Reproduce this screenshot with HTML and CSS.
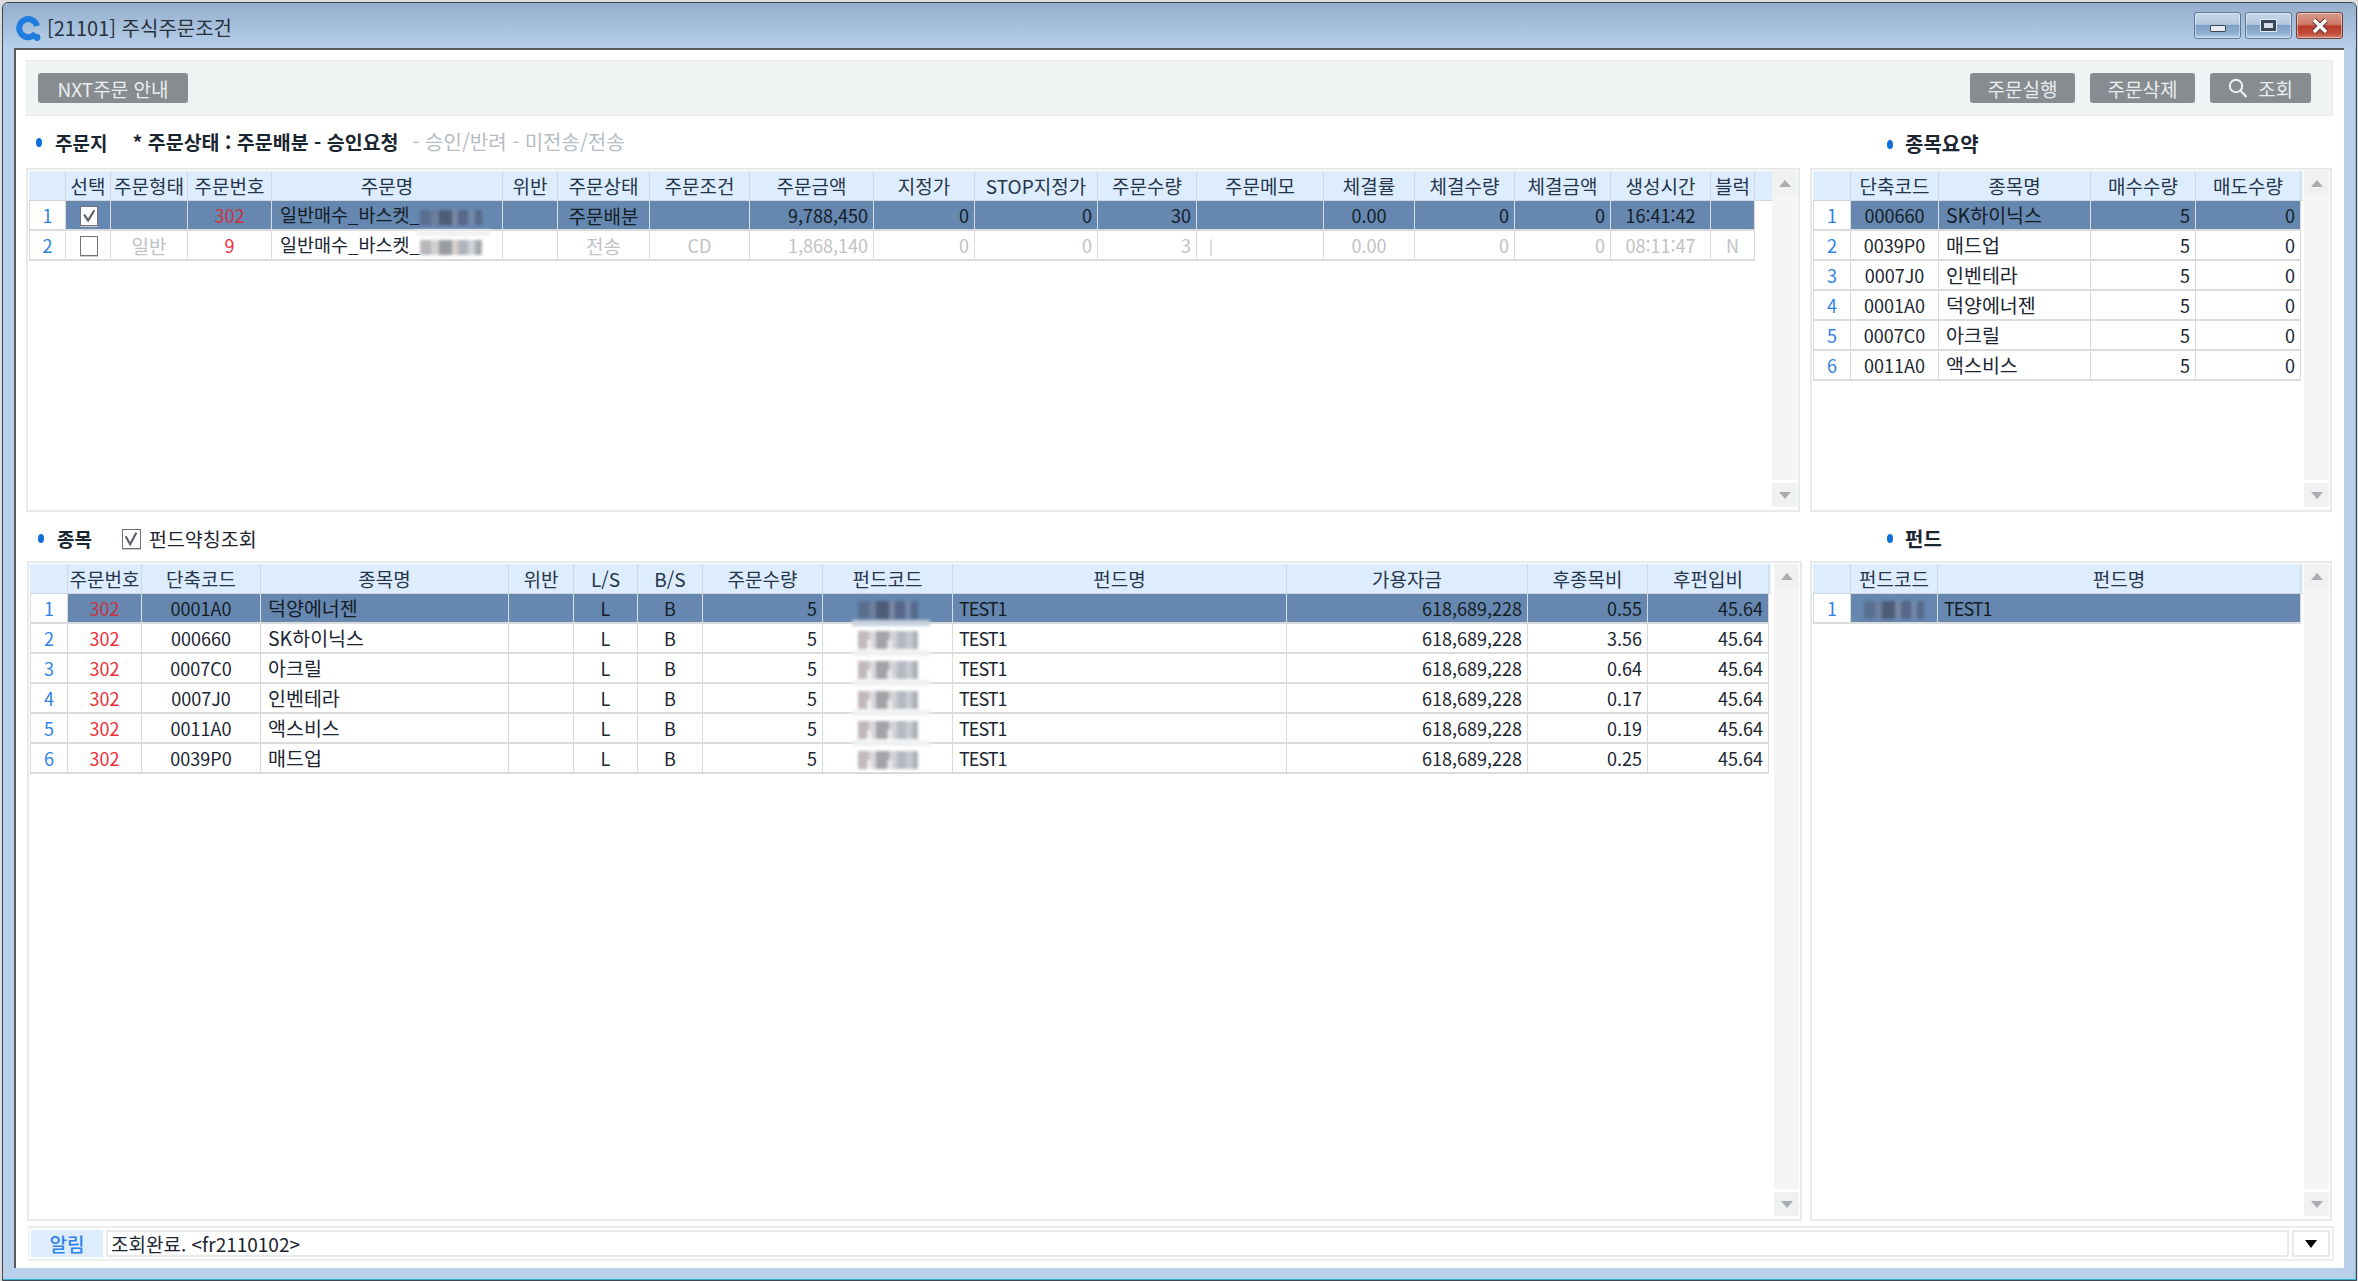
FILE: index.html
```html
<!DOCTYPE html>
<html lang="ko">
<head>
    <meta charset="utf-8">
    <title>[21101] 주식주문조건</title>
    <link rel="stylesheet" href="styles.css">
</head>

<body>
<div class="window">
    <div class="titlebar">
        <svg class="app-icon" viewBox="0 0 26 26"><path d="M19.5 17.5A9 9 0 1 1 21 10" fill="none" stroke="#1f7de0" stroke-width="6"/><circle cx="21" cy="21.5" r="3.4" fill="#1f7de0"/></svg>
        <span class="title-text">[21101] 주식주문조건</span>
        <div class="win-buttons">
            <div class="win-btn"><span class="glyph-min"></span></div>
            <div class="win-btn"><span class="glyph-max"></span></div>
            <div class="win-btn close">
                <svg viewBox="0 0 20 16" class="glyph-x"><path d="M4 2 16 14M16 2 4 14" stroke="#5c3a36" stroke-width="5.4"/><path d="M4 2 16 14M16 2 4 14" stroke="#fff" stroke-width="3.4"/></svg>
            </div>
        </div>
    </div>

    <div class="main">
        <div class="toolbar">
            <button class="btn nxt">NXT주문 안내</button>
            <div class="toolbar-right">
                <button class="btn">주문실행</button>
                <button class="btn">주문삭제</button>
                <button class="btn search">
                    <svg class="search-icon" viewBox="0 0 20 20"><circle cx="8" cy="8" r="6.2" fill="none" stroke="#eef1f2" stroke-width="2"/><path d="M12.5 12.5 18.5 19" stroke="#eef1f2" stroke-width="2.2"/></svg>
                    조회
                </button>
            </div>
        </div>

        <div class="pane-row top">
            <div class="pane">
                <div class="head">
                    <span class="bullet"></span><span class="head-name">주문지</span>
                    <span class="status">* 주문상태 : 주문배분 - 승인요청</span>
                    <span class="status-off">- 승인/반려 - 미전송/전송</span>
                </div>
                <div class="panel">
                    <table class="grid orders">
                        <colgroup><col><col><col><col><col><col><col><col><col><col><col><col><col><col><col><col><col><col><col></colgroup>
                        <thead><tr><th></th><th>선택</th><th>주문형태</th><th>주문번호</th><th>주문명</th><th>위반</th><th>주문상태</th><th>주문조건</th><th>주문금액</th><th>지정가</th><th>STOP지정가</th><th>주문수량</th><th>주문메모</th><th>체결률</th><th>체결수량</th><th>체결금액</th><th>생성시간</th><th>블럭</th><th class="filler"></th></tr></thead>
                        <tbody>
                        <tr class="selected">
                            <td class="no">1</td>
                            <td><span class="check on"><svg viewBox="0 0 18 18"><path d="M3.5 7.5 8 14 15 2.5" fill="none" stroke="#5a6066" stroke-width="2.4"/></svg></span></td>
                            <td></td><td class="red">302</td>
                            <td class="l basket">일반매수_바스켓_<span class="mosaic strip"></span></td>
                            <td></td><td class="ko">주문배분</td><td></td>
                            <td class="r">9,788,450</td><td class="r">0</td><td class="r">0</td><td class="r">30</td><td></td>
                            <td>0.00</td><td class="r">0</td><td class="r">0</td><td>16:41:42</td><td></td><td class="filler"></td>
                        </tr>
                        <tr class="muted">
                            <td class="no">2</td>
                            <td><span class="check"></span></td>
                            <td class="ko">일반</td><td class="red">9</td>
                            <td class="l basket dark">일반매수_바스켓_<span class="mosaic"></span></td>
                            <td></td><td class="ko">전송</td><td>CD</td>
                            <td class="r">1,868,140</td><td class="r">0</td><td class="r">0</td><td class="r">3</td><td class="memo">|</td>
                            <td>0.00</td><td class="r">0</td><td class="r">0</td><td>08:11:47</td><td>N</td><td class="filler"></td>
                        </tr>
                        </tbody>
                    </table>
                    <div class="scrollbar"><div class="sb-btn"><span class="arrow-up"></span></div><div class="sb-track"></div><div class="sb-btn"><span class="arrow-down"></span></div></div>
                </div>
            </div>

            <div class="pane">
                <div class="head side"><span class="bullet"></span><span class="head-name">종목요약</span></div>
                <div class="panel">
                    <table class="grid summary">
                        <colgroup><col><col><col><col><col><col></colgroup>
                        <thead><tr><th></th><th>단축코드</th><th>종목명</th><th>매수수량</th><th>매도수량</th><th class="filler"></th></tr></thead>
                        <tbody>
                        <tr class="selected"><td class="no">1</td><td>000660</td><td class="l">SK하이닉스</td><td class="r">5</td><td class="r">0</td><td class="filler"></td></tr>
                        <tr><td class="no">2</td><td>0039P0</td><td class="l">매드업</td><td class="r">5</td><td class="r">0</td><td class="filler"></td></tr>
                        <tr><td class="no">3</td><td>0007J0</td><td class="l">인벤테라</td><td class="r">5</td><td class="r">0</td><td class="filler"></td></tr>
                        <tr><td class="no">4</td><td>0001A0</td><td class="l">덕양에너젠</td><td class="r">5</td><td class="r">0</td><td class="filler"></td></tr>
                        <tr><td class="no">5</td><td>0007C0</td><td class="l">아크릴</td><td class="r">5</td><td class="r">0</td><td class="filler"></td></tr>
                        <tr><td class="no">6</td><td>0011A0</td><td class="l">액스비스</td><td class="r">5</td><td class="r">0</td><td class="filler"></td></tr>
                        </tbody>
                    </table>
                    <div class="scrollbar"><div class="sb-btn"><span class="arrow-up"></span></div><div class="sb-track"></div><div class="sb-btn"><span class="arrow-down"></span></div></div>
                </div>
            </div>
        </div>

        <div class="pane-row bottom">
            <div class="pane">
                <div class="head">
                    <span class="bullet"></span><span class="head-name">종목</span>
                    <span class="check big on"><svg viewBox="0 0 18 18"><path d="M3 6 8 15 15 2" fill="none" stroke="#5a6066" stroke-width="2.4"/></svg></span>
                    <span class="check-label">펀드약칭조회</span>
                </div>
                <div class="panel">
                    <table class="grid stocks">
                        <colgroup><col><col><col><col><col><col><col><col><col><col><col><col><col><col></colgroup>
                        <thead><tr><th></th><th>주문번호</th><th>단축코드</th><th>종목명</th><th>위반</th><th>L/S</th><th>B/S</th><th>주문수량</th><th>펀드코드</th><th>펀드명</th><th>가용자금</th><th>후종목비</th><th>후펀입비</th><th class="filler"></th></tr></thead>
                        <tbody>
                        <tr class="selected"><td class="no">1</td><td class="red">302</td><td>0001A0</td><td class="l">덕양에너젠</td><td></td><td>L</td><td>B</td><td class="r">5</td><td><span class="mosaic wide strip"></span></td><td class="l test">TEST1</td><td class="r">618,689,228</td><td class="r">0.55</td><td class="r">45.64</td><td class="filler"></td></tr>
                        <tr><td class="no">2</td><td class="red">302</td><td>000660</td><td class="l">SK하이닉스</td><td></td><td>L</td><td>B</td><td class="r">5</td><td><span class="mosaic wide strip"></span></td><td class="l test">TEST1</td><td class="r">618,689,228</td><td class="r">3.56</td><td class="r">45.64</td><td class="filler"></td></tr>
                        <tr><td class="no">3</td><td class="red">302</td><td>0007C0</td><td class="l">아크릴</td><td></td><td>L</td><td>B</td><td class="r">5</td><td><span class="mosaic wide strip"></span></td><td class="l test">TEST1</td><td class="r">618,689,228</td><td class="r">0.64</td><td class="r">45.64</td><td class="filler"></td></tr>
                        <tr><td class="no">4</td><td class="red">302</td><td>0007J0</td><td class="l">인벤테라</td><td></td><td>L</td><td>B</td><td class="r">5</td><td><span class="mosaic wide strip"></span></td><td class="l test">TEST1</td><td class="r">618,689,228</td><td class="r">0.17</td><td class="r">45.64</td><td class="filler"></td></tr>
                        <tr><td class="no">5</td><td class="red">302</td><td>0011A0</td><td class="l">액스비스</td><td></td><td>L</td><td>B</td><td class="r">5</td><td><span class="mosaic wide strip"></span></td><td class="l test">TEST1</td><td class="r">618,689,228</td><td class="r">0.19</td><td class="r">45.64</td><td class="filler"></td></tr>
                        <tr><td class="no">6</td><td class="red">302</td><td>0039P0</td><td class="l">매드업</td><td></td><td>L</td><td>B</td><td class="r">5</td><td><span class="mosaic wide"></span></td><td class="l test">TEST1</td><td class="r">618,689,228</td><td class="r">0.25</td><td class="r">45.64</td><td class="filler"></td></tr>
                        </tbody>
                    </table>
                    <div class="scrollbar"><div class="sb-btn"><span class="arrow-up"></span></div><div class="sb-track"></div><div class="sb-btn"><span class="arrow-down"></span></div></div>
                </div>
            </div>

            <div class="pane">
                <div class="head side"><span class="bullet"></span><span class="head-name">펀드</span></div>
                <div class="panel">
                    <table class="grid funds">
                        <colgroup><col><col><col><col></colgroup>
                        <thead><tr><th></th><th>펀드코드</th><th>펀드명</th><th class="filler"></th></tr></thead>
                        <tbody>
                        <tr class="selected"><td class="no">1</td><td><span class="mosaic wide"></span></td><td class="l test">TEST1</td><td class="filler"></td></tr>
                        </tbody>
                    </table>
                    <div class="scrollbar"><div class="sb-btn"><span class="arrow-up"></span></div><div class="sb-track"></div><div class="sb-btn"><span class="arrow-down"></span></div></div>
                </div>
            </div>
        </div>

        <div class="notice">
            <div class="notice-label">알림</div>
            <div class="notice-text">조회완료. &lt;fr2110102&gt;</div>
            <div class="notice-drop"><span class="arrow-black"></span></div>
        </div>
    </div>
</div>
</body>
</html>
```

FILE: styles.css
```css
* {
    box-sizing: border-box;
}

body {
    margin: 0;
    height: 1281px;
    overflow: hidden;
    background-color: #dcdcdc;
    font-family: "Noto Sans CJK KR", "Noto Sans", sans-serif;
    font-size: 18px;
    color: #1b2530;
}

.window {
    margin: 2px 0 0 2px;
    width: 2355px;
    height: 1279px;
    background-color: #b9d0ea;
    border: 1px solid #3d4650;
    border-radius: 6px 6px 0 0;
    box-shadow: inset 0 -1px 0 #2fb3cf, inset -1px 0 0 #7fb8d8;
}

/* title bar */
.titlebar {
    display: flex;
    align-items: center;
    height: 45px;
    padding-left: 13px;
    background: linear-gradient(#94aecd, #b7cfe9);
    border-radius: 6px 6px 0 0;
}

.app-icon {
    width: 26px;
    height: 26px;
    margin-top: 6px;
}

.title-text {
    margin-left: 5px;
    margin-top: 4px;
    font-size: 20px;
    color: #27313c;
}

.win-buttons {
    display: flex;
    gap: 4px;
    margin-left: auto;
    margin-right: 13px;
}

.win-btn {
    display: flex;
    align-items: center;
    justify-content: center;
    width: 47px;
    height: 27px;
    border: 1px solid #5f7894;
    border-radius: 3px;
    background: linear-gradient(#c6d6e8 0, #b3c8df 45%, #7e9fc4 50%, #90afd0 80%, #bcd0e8 100%);
    box-shadow: inset 0 0 0 1px rgba(255, 255, 255, 0.45);
}

.win-btn.close {
    border-color: #70403a;
    background: linear-gradient(#d89a8c 0, #cf7a69 45%, #b93a28 52%, #c04a36 80%, #d57f6e 100%);
}

.glyph-min {
    width: 16px;
    height: 7px;
    margin-top: 5px;
    background-color: #e6ecf2;
    border: 1px solid #3b4756;
    border-radius: 1px;
}

.glyph-max {
    width: 15px;
    height: 11px;
    margin-top: -1px;
    background-color: #d5deea;
    border: 3px solid #38465a;
    box-shadow: 0 0 0 1px #e4ecf4;
}

.glyph-x {
    width: 20px;
    height: 16px;
}

/* main area */
.main {
    display: flex;
    flex-direction: column;
    height: 1220px;
    margin: 0 12px 0 11px;
    padding: 10px 11px 6px 10px;
    background-color: white;
    border-top: 2px solid #565b60;
    border-left: 2px solid #565b60;
}

.toolbar {
    display: flex;
    align-items: center;
    justify-content: space-between;
    height: 56px;
    padding: 0 21px 0 11px;
    background-color: #f0f3f4;
    border: 1px solid #e6e9ea;
}

.toolbar-right {
    display: flex;
    gap: 15px;
}

.btn {
    display: flex;
    align-items: center;
    justify-content: center;
    gap: 10px;
    width: 105px;
    height: 30px;
    padding: 0;
    background-color: #878c90;
    border: none;
    border-radius: 3px;
    font-family: inherit;
    font-size: 19px;
    color: #eaedef;
}

.btn.nxt {
    width: 150px;
}

.btn.search {
    width: 101px;
}

.search-icon {
    width: 20px;
    height: 20px;
}

.pane-row {
    display: grid;
}

.pane-row.top {
    grid-template-columns: 1774px 522px;
    gap: 10px;
    height: 396px;
}

.pane-row.bottom {
    grid-template-columns: 1775px 522px;
    gap: 8px;
    height: 709px;
    margin-left: 1px;
}

.pane {
    display: flex;
    flex-direction: column;
    min-height: 0;
}

.head {
    display: flex;
    align-items: center;
    height: 52px;
    padding-left: 10px;
    font-weight: 700;
    font-size: 19px;
    line-height: 1;
}

.bottom .head {
    height: 49px;
    padding-top: 4px;
    padding-left: 11px;
}

.head.side {
    padding-left: 77px;
    padding-top: 4px;
    font-size: 20px;
}

.bullet {
    width: 6px;
    height: 9px;
    margin-right: 13px;
    border-radius: 50%;
    background-color: #0e6fdc;
}

.head.side .bullet {
    margin-right: 12px;
}

.status {
    margin-left: 25px;
    font-size: 19.5px;
}

.status-off {
    margin-left: 14px;
    font-weight: 400;
    font-size: 20px;
    color: #b6bcc2;
}

.check-label {
    font-weight: 400;
    font-size: 19.5px;
    margin-left: 8px;
}

/* grids */
.panel {
    display: flex;
    flex: 1;
    min-height: 0;
    padding: 1px;
    background-color: white;
    border: 2px solid #e7e9ea;
}

.grid {
    table-layout: fixed;
    align-self: flex-start;
    border-collapse: separate;
    border-spacing: 0;
    line-height: 1;
}

.grid th {
    height: 30px;
    padding: 0;
    font-weight: 400;
    font-size: 19px;
    color: #25354a;
    background-color: #deedfe;
    border-right: 1px solid #cfd7de;
    border-bottom: 1px solid #cfd7de;
    white-space: nowrap;
}

.grid td {
    position: relative;
    height: 30px;
    padding: 0 5px;
    text-align: center;
    white-space: nowrap;
    border-right: 1px solid #d9dbdd;
    border-bottom: 2px solid #d9dbdd;
}

.grid td.l {
    padding-left: 7px;
    text-align: left;
    font-size: 19.5px;
}

.grid td.basket {
    padding-left: 8px;
    font-size: 18.5px;
}

.grid td.test {
    padding-left: 6px;
    font-size: 18px;
    letter-spacing: -1px;
}

.grid td.ko {
    font-size: 19px;
}

.grid td.memo {
    padding-left: 12px;
    text-align: left;
    font-size: 15px;
}

.grid td.r {
    text-align: right;
}

.grid td.no {
    color: #2f82e6;
    background-color: white;
    border-left: 1px solid #d9dbdd;
}

.grid .red {
    color: #ee2f3a;
}

.grid .selected td {
    background-color: #6688b0;
    color: #141c26;
}

.grid .selected td.no {
    background-color: white;
    color: #2f82e6;
}

.grid .selected td.red {
    color: #c8323e;
}

.grid .muted td {
    color: #bfc2c5;
}

.grid .muted td.no {
    color: #2f82e6;
}

.grid .muted td.red {
    color: #ee2f3a;
}

.grid .muted td.dark {
    color: #1b2530;
}

.grid td.filler {
    padding: 0;
    background: none !important;
    border: none;
}

.grid th.filler {
    border-right: none;
}

.orders {
    width: 1743px;
}

.orders col:nth-child(1) { width: 37px; }
.orders col:nth-child(2) { width: 45px; }
.orders col:nth-child(3) { width: 77px; }
.orders col:nth-child(4) { width: 84px; }
.orders col:nth-child(5) { width: 231px; }
.orders col:nth-child(6) { width: 55px; }
.orders col:nth-child(7) { width: 92px; }
.orders col:nth-child(8) { width: 100px; }
.orders col:nth-child(9) { width: 124px; }
.orders col:nth-child(10) { width: 101px; }
.orders col:nth-child(11) { width: 123px; }
.orders col:nth-child(12) { width: 99px; }
.orders col:nth-child(13) { width: 127px; }
.orders col:nth-child(14) { width: 91px; }
.orders col:nth-child(15) { width: 100px; }
.orders col:nth-child(16) { width: 96px; }
.orders col:nth-child(17) { width: 100px; }
.orders col:nth-child(18) { width: 44px; }
.orders col:nth-child(19) { width: 17px; }

.orders .check {
    margin-left: 2px;
}

.summary {
    width: 490px;
}

.summary col:nth-child(1) { width: 38px; }
.summary col:nth-child(2) { width: 88px; }
.summary col:nth-child(3) { width: 152px; }
.summary col:nth-child(4) { width: 105px; }
.summary col:nth-child(5) { width: 105px; }
.summary col:nth-child(6) { width: 2px; }

.stocks {
    width: 1741px;
}

.stocks col:nth-child(1) { width: 38px; }
.stocks col:nth-child(2) { width: 74px; }
.stocks col:nth-child(3) { width: 119px; }
.stocks col:nth-child(4) { width: 248px; }
.stocks col:nth-child(5) { width: 65px; }
.stocks col:nth-child(6) { width: 64px; }
.stocks col:nth-child(7) { width: 65px; }
.stocks col:nth-child(8) { width: 120px; }
.stocks col:nth-child(9) { width: 130px; }
.stocks col:nth-child(10) { width: 334px; }
.stocks col:nth-child(11) { width: 241px; }
.stocks col:nth-child(12) { width: 120px; }
.stocks col:nth-child(13) { width: 121px; }
.stocks col:nth-child(14) { width: 2px; }

.funds {
    width: 490px;
}

.funds col:nth-child(1) { width: 38px; }
.funds col:nth-child(2) { width: 87px; }
.funds col:nth-child(3) { width: 363px; }
.funds col:nth-child(4) { width: 2px; }

/* checkboxes */
.check {
    display: inline-block;
    width: 18px;
    height: 20px;
    vertical-align: middle;
    background-color: white;
    border: 1px solid #6d7278;
    box-shadow: 0 1px 0 #c9ccd0;
}

.check svg {
    display: block;
    width: 16px;
    height: 18px;
}

.check.big {
    width: 19px;
    height: 20px;
    margin-left: 30px;
}

/* blurred-out values */
.mosaic {
    position: relative;
    display: inline-block;
    width: 62px;
    height: 15px;
    vertical-align: -3px;
    background:
        linear-gradient(90deg, #b8b8bc 0 18%, #cfcfd2 18% 30%, #9a9ba0 30% 52%, #d6d2cc 52% 62%, #b2b4ba 62% 78%, #d0d3d8 78% 88%, #a6aab0 88% 100%);
    filter: blur(1.5px);
}

.selected .mosaic {
    background:
        linear-gradient(90deg, #5a6f90 0 18%, #6c7f9f 18% 30%, #4e5d78 30% 52%, #7788a4 52% 62%, #56678a 62% 78%, #7288a8 78% 88%, #566a8c 88% 100%);
}

.mosaic.wide {
    width: 60px;
    height: 18px;
    vertical-align: middle;
    background:
        linear-gradient(90deg, transparent 0 15%, rgba(255, 255, 255, 0.75) 15% 22%, transparent 22% 48%, rgba(255, 255, 255, 0.6) 48% 56%, transparent 56% 100%) 0 9px / 100% 9px no-repeat,
        linear-gradient(90deg, #c0b8ba 0 18%, #d8d8da 18% 30%, #a3a4a8 30% 52%, #d0d2d4 52% 65%, #b4bac0 65% 80%, #c8ccd2 80% 90%, #b0b2b6 90% 100%);
}

.selected .mosaic.wide {
    background:
        linear-gradient(90deg, #5a6f90 0 18%, #6c7f9f 18% 30%, #4e5d78 30% 52%, #7788a4 52% 62%, #56678a 62% 78%, #7288a8 78% 88%, #566a8c 88% 100%);
}

.strip::after {
    content: "";
    position: absolute;
    left: -4px;
    right: -8px;
    top: 100%;
    margin-top: 5px;
    height: 6px;
    background-color: #f0f1f2;
}

.stocks .strip::after {
    margin-top: 1px;
    left: -6px;
    right: -12px;
}

.stocks .selected .strip::after {
    background-color: #c6d0dc;
}

/* scrollbars */
.scrollbar {
    display: flex;
    flex-direction: column;
    width: 25px;
    margin-left: auto;
    padding: 0 0 2px;
}

.sb-btn {
    display: flex;
    align-items: center;
    justify-content: center;
    height: 24px;
    background-color: #f0f1f1;
}

.sb-track {
    flex: 1;
    margin: 0 0 3px;
    background-color: #fbfbfb;
    background-image: repeating-conic-gradient(#efefef 0 25%, #fbfbfb 0 50%);
    background-size: 2px 2px;
}

.arrow-up {
    border: 6px solid transparent;
    border-top: none;
    border-bottom: 7px solid #a9adb0;
}

.arrow-down {
    border: 6px solid transparent;
    border-bottom: none;
    border-top: 7px solid #a9adb0;
}

/* notice bar */
.notice {
    display: flex;
    gap: 3px;
    height: 35px;
    margin: 5px -1px 1px 2px;
    padding: 2px;
    font-size: 19px;
    border: 2px solid #eceded;
    border-left-width: 1px;
}

.notice-label {
    display: flex;
    align-items: center;
    justify-content: center;
    width: 72px;
    font-weight: 500;
    color: #2f82e6;
    background-color: #deedfe;
    line-height: 1;
}

.notice-text {
    flex: 1;
    display: flex;
    align-items: center;
    padding-left: 3px;
    border: 2px solid #e8e9ea;
    line-height: 1;
}

.notice-drop {
    display: flex;
    align-items: center;
    justify-content: center;
    width: 38px;
    border: 2px solid #e8e9ea;
}

.arrow-black {
    border: 6px solid transparent;
    border-bottom: none;
    border-top: 8px solid black;
}
```
